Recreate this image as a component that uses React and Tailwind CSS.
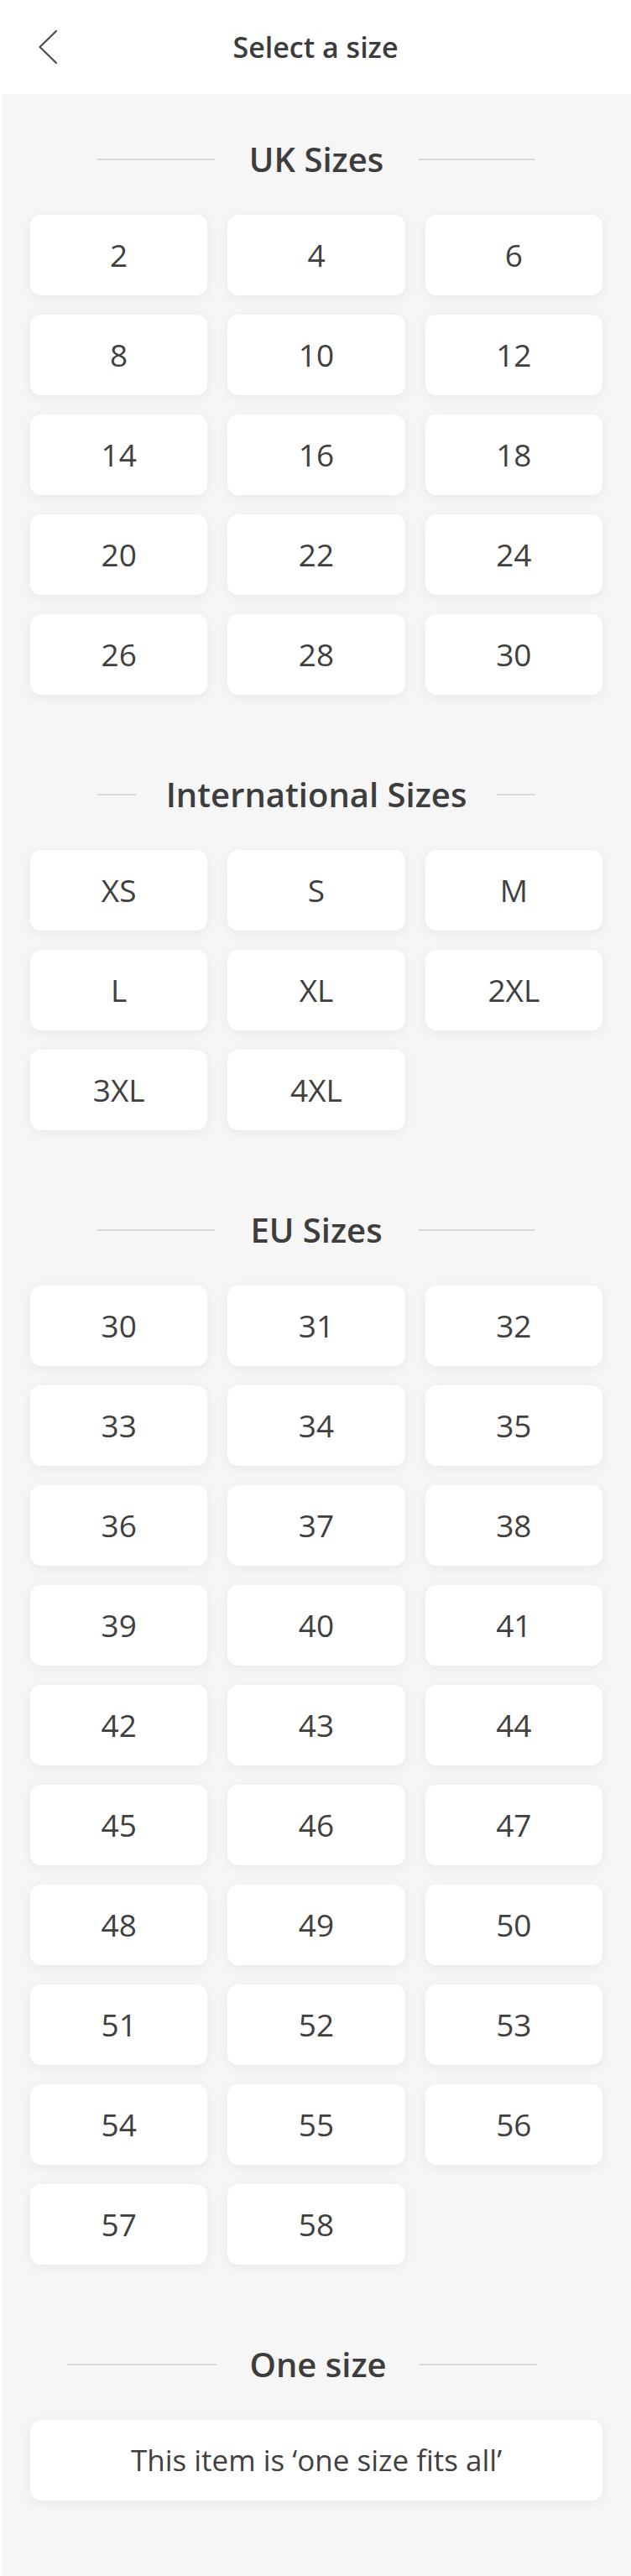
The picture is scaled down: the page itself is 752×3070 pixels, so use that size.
import React from "react";

const uk = ["2", "4", "6", "8", "10", "12", "14", "16", "18", "20", "22", "24", "26", "28", "30"];
const intl = ["XS", "S", "M", "L", "XL", "2XL", "3XL", "4XL"];
const eu = [];
for (let i = 30; i <= 58; i++) eu.push(String(i));

function SectionTitle({ children }) {
	return (
		<div className="flex items-center px-[114px] h-[48px]">
			<div className="flex-1 h-[2px] bg-[#dadada]" />
			<h2 className="min-w-[243px] px-[36px] text-center text-[40px] leading-[48px] font-semibold text-[#3d3d3d]">
				{children}
			</h2>
			<div className="flex-1 h-[2px] bg-[#dadada]" />
		</div>
	);
}

function SizeButton({ label }) {
	return (
		<button className="h-[96px] rounded-[13px] bg-white shadow-[0_3px_14px_rgba(0,0,0,0.06)] flex items-center justify-center text-[37px] font-normal text-[#404040]">
			{label}
		</button>
	);
}

function SizeSection({ title, sizes }) {
	return (
		<section className="pt-[54px] pb-[41px]">
			<SectionTitle>{title}</SectionTitle>
			<div className="mt-[42px] px-[34px] grid grid-cols-3 gap-x-[24px] gap-y-[23px]">
				{sizes.map((s) => (
					<SizeButton key={s} label={s} />
				))}
			</div>
		</section>
	);
}

export default function App() {
	return (
		<div className="min-h-screen flex flex-col bg-white font-['Open_Sans','Liberation_Sans',sans-serif]">
			<header className="h-[112px] grid grid-cols-[1fr_auto_1fr] items-center bg-white">
				<div className="pl-[46px]">
					<svg width="22" height="40" viewBox="0 0 22 40" fill="none">
						<path d="M21 1 L1.5 20 L21 39" stroke="#444" strokeWidth="2" strokeLinecap="round" strokeLinejoin="round" />
					</svg>
				</div>
				<h1 className="text-[34px] font-semibold text-[#3c3c3c] leading-none">Select a size</h1>
				<div />
			</header>

			<main className="flex-1 bg-[#f6f6f6] border-l-2 border-white">
				<SizeSection title="UK Sizes" sizes={uk} />
				<SizeSection title="International Sizes" sizes={intl} />
				<SizeSection title="EU Sizes" sizes={eu} />

				<section className="pt-[54px] pb-[90px]">
					<div className="flex items-center h-[48px] pl-[78px]">
						<div className="w-[178px] h-[2px] bg-[#dadada]" />
						<h2 className="w-[242px] text-center text-[40px] leading-[48px] font-semibold text-[#3d3d3d]">
							One size
						</h2>
						<div className="w-[140px] h-[2px] bg-[#dadada]" />
					</div>
					<div className="mt-[42px] px-[34px]">
						<div className="h-[96px] rounded-[13px] bg-white shadow-[0_3px_14px_rgba(0,0,0,0.06)] flex items-center justify-center text-[35px] text-[#404040]">
							This item is ‘one size fits all’
						</div>
					</div>
				</section>
			</main>
		</div>
	);
}
